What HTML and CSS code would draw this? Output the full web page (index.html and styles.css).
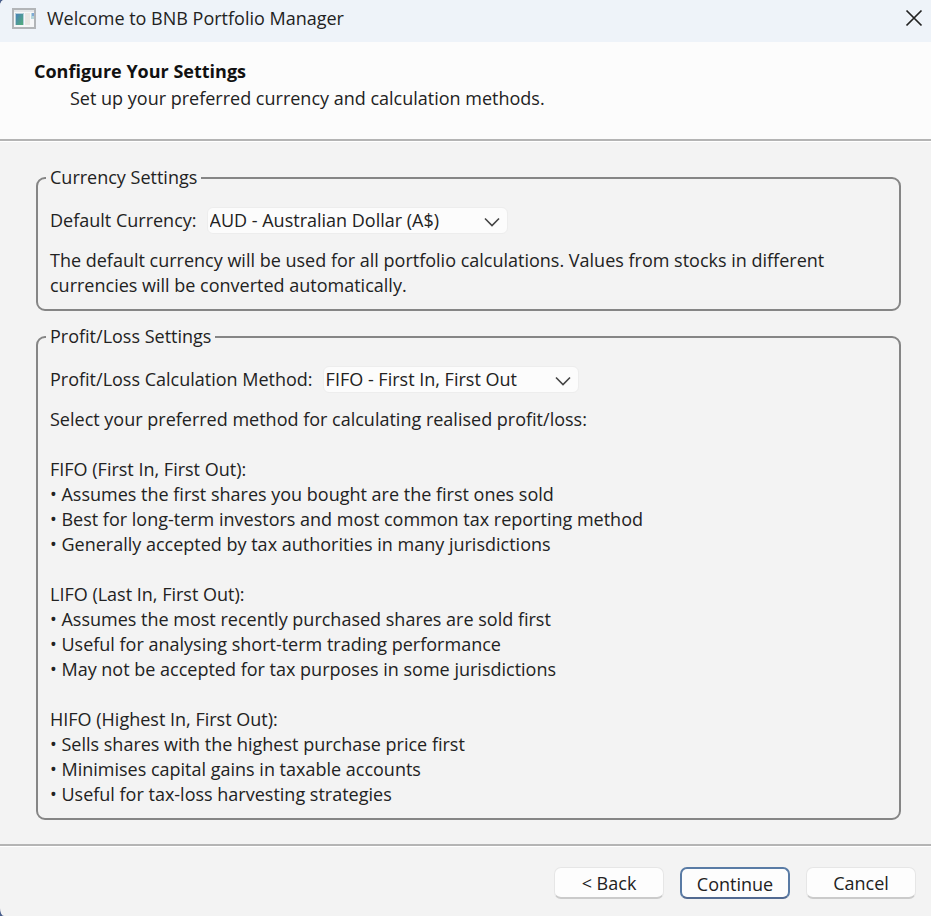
FILE: index.html
```html
<!DOCTYPE html>
<html lang="en">
<head>
<meta charset="utf-8">
<title>Welcome to BNB Portfolio Manager</title>
<link rel="stylesheet" href="styles.css">
</head>
<body>
<div class="wizard">
  <div class="titlebar">
    <svg class="app-icon" width="24" height="21" viewBox="0 0 24 21" aria-hidden="true">
      <defs>
        <linearGradient id="pane" x1="0" y1="0" x2="1" y2="1">
          <stop offset="0" stop-color="#4a82b8"/>
          <stop offset="1" stop-color="#52ad78"/>
        </linearGradient>
      </defs>
      <rect x="1" y="1" width="22" height="19" fill="#f6f7f8" stroke="#b2b5b8" stroke-width="2"/>
      <path d="M2 3h20" stroke="#d3d6d9"/>
      <rect x="3" y="5" width="9" height="12" fill="#b5cfda"/>
      <rect x="4" y="6" width="7" height="11" fill="url(#pane)"/>
      <rect x="13" y="5" width="5" height="12" fill="#e9e7e4"/>
      <rect x="19" y="5" width="3" height="6" fill="#b5d6dc"/>
      <rect x="20" y="5" width="2" height="3" fill="#7fa9d6"/>
    </svg>
    <span class="caption">Welcome to BNB Portfolio Manager</span>
    <button class="close" type="button" aria-label="Close">
      <svg width="18" height="18" viewBox="0 0 18 18" aria-hidden="true"><path d="M1.500 1.500l15 15M16.500 1.500l-15 15" fill="none" stroke="#222" stroke-width="1.700"/></svg>
    </button>
  </div>
  <header class="banner">
    <h1>Configure Your Settings</h1>
    <p>Set up your preferred currency and calculation methods.</p>
  </header>
  <main class="page">
    <fieldset>
      <legend>Currency Settings</legend>
      <div class="row">
        <label for="currency">Default Currency:</label>
        <div class="combo combo-currency">
          <select id="currency"><option>AUD - Australian Dollar (A$)</option></select>
          <svg class="chevron" width="16" height="10" viewBox="0 0 16 10" aria-hidden="true"><path d="M1 1.500l7 7 7-7" fill="none" stroke="#444" stroke-width="1.600"/></svg>
        </div>
      </div>
      <p>The default currency will be used for all portfolio calculations. Values from stocks in different currencies will be converted automatically.</p>
    </fieldset>
    <fieldset>
      <legend>Profit/Loss Settings</legend>
      <div class="row">
        <label for="method">Profit/Loss Calculation Method:</label>
        <div class="combo combo-method">
          <select id="method"><option>FIFO - First In, First Out</option></select>
          <svg class="chevron" width="16" height="10" viewBox="0 0 16 10" aria-hidden="true"><path d="M1 1.500l7 7 7-7" fill="none" stroke="#444" stroke-width="1.600"/></svg>
        </div>
      </div>
      <div class="methods">
        <p>Select your preferred method for calculating realised profit/loss:</p>
        <div>
          <p>FIFO (First In, First Out):</p>
          <p>• Assumes the first shares you bought are the first ones sold</p>
          <p>• Best for long-term investors and most common tax reporting method</p>
          <p>• Generally accepted by tax authorities in many jurisdictions</p>
        </div>
        <div>
          <p>LIFO (Last In, First Out):</p>
          <p>• Assumes the most recently purchased shares are sold first</p>
          <p>• Useful for analysing short-term trading performance</p>
          <p>• May not be accepted for tax purposes in some jurisdictions</p>
        </div>
        <div>
          <p>HIFO (Highest In, First Out):</p>
          <p>• Sells shares with the highest purchase price first</p>
          <p>• Minimises capital gains in taxable accounts</p>
          <p>• Useful for tax-loss harvesting strategies</p>
        </div>
      </div>
    </fieldset>
  </main>
  <footer class="actions">
    <button class="btn" type="button">&lt; Back</button>
    <button class="btn primary" type="button">Continue</button>
    <button class="btn" type="button">Cancel</button>
  </footer>
</div>
</body>
</html>
```
FILE: styles.css
```css
* {
  box-sizing: border-box;
}

body {
  margin: 0;
  background: #4a5f8c;
  color: #222;
  font: 18px/25px "Open Sans", "Noto Sans", sans-serif;
}

h1,
p {
  margin: 0;
  font-size: inherit;
}

button,
select {
  color: inherit;
  font: inherit;
}

.wizard {
  display: flex;
  flex-direction: column;
  min-height: 100vh;
  overflow: hidden;
  border-radius: 4px 0 0 4px / 6px 0 0 8px;
  background: #f3f3f3;
}

.titlebar {
  display: flex;
  align-items: center;
  height: 42px;
  padding: 0 8px 6px 12px;
  background: #eef3f9;
}

.app-icon {
  flex: none;
}

.caption {
  flex: 1;
  margin-left: 11px;
}

.close {
  display: flex;
  padding: 0;
  border: 0;
  background: none;
}

.banner {
  height: 99px;
  padding: 17px 34px;
  border-bottom: 2px solid #b4b4b4;
  background: #fcfcfc;
  box-shadow: 0 1px #fff;
}

.banner h1 {
  color: #111;
  font-weight: 700;
}

.banner p {
  padding: 2px 0 0 36px;
}

.page {
  display: flex;
  flex: 1;
  flex-direction: column;
  gap: 13px;
  padding: 24px 30px 23px 36px;
}

fieldset {
  min-width: 0;
  margin: 0;
  padding: 17px 12px 11px;
  border: 2px solid #858585;
  border-radius: 9px;
}

legend {
  margin-left: -4px;
  padding: 0 4px;
}

.row {
  display: flex;
  align-items: center;
  gap: 10px;
  margin-bottom: 14px;
}

.combo {
  position: relative;
}

.combo-currency {
  width: 301px;
}

.combo-method {
  width: 256px;
}

select {
  display: block;
  width: 100%;
  height: 27px;
  padding: 0 36px 0 2px;
  border: 1px solid #ededed;
  border-radius: 6px;
  background: #fcfcfc;
  line-height: 25px;
  appearance: none;
}

.chevron {
  position: absolute;
  top: 10px;
  right: 8px;
  pointer-events: none;
}

.methods {
  display: grid;
  gap: 25px;
}

.actions {
  display: flex;
  justify-content: flex-end;
  gap: 16px;
  padding: 21px 15px 17px;
  border-top: 2px solid #b4b4b4;
  box-shadow: inset 0 1px #fff;
}

.btn {
  width: 110px;
  height: 32px;
  padding: 1px 0 0;
  border: 1px solid #e6e6e6;
  border-bottom: 2px solid #cbcbcb;
  border-radius: 7px;
  background: #fdfdfd;
  line-height: 28px;
}

.primary {
  border: 2px solid #597ba5;
  border-bottom-color: #526a91;
}
```
